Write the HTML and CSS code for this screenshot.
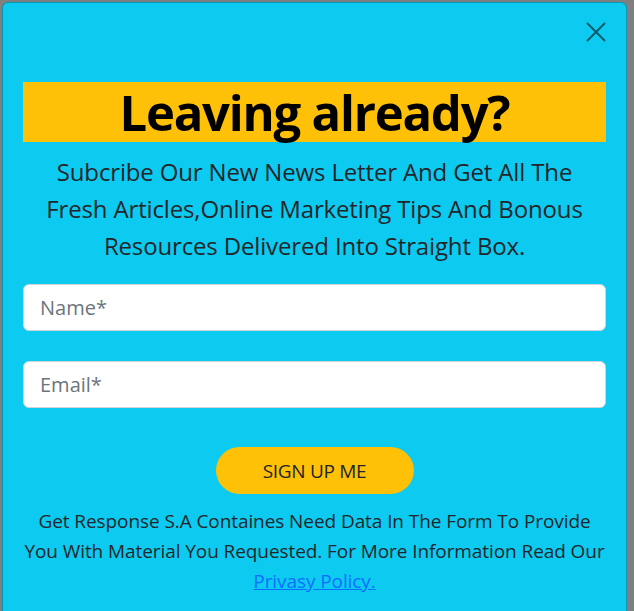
FILE: index.html
```html
<!DOCTYPE html>
<html lang="en">
<head>
<meta charset="utf-8">
<title>Leaving already?</title>
<link rel="stylesheet" href="styles.css">
</head>
<body>
<div class="modal">
  <div class="modal-header">
    <button class="btn-close" type="button" aria-label="Close">
      <svg viewBox="0 0 20 20" width="20" height="20" aria-hidden="true">
        <path d="M1 1 L19 19 M19 1 L1 19" fill="none" stroke="currentColor" stroke-width="2"/>
      </svg>
    </button>
  </div>
  <div class="modal-body">
    <h1 class="title">Leaving already?</h1>
    <p class="lead">Subcribe Our New News Letter And Get All The<br>Fresh Articles,Online Marketing Tips And Bonous<br>Resources Delivered Into Straight Box.</p>
    <form class="signup-form">
      <input class="field" type="text" placeholder="Name*">
      <input class="field" type="email" placeholder="Email*">
      <button class="signup-btn" type="button">SIGN UP ME</button>
    </form>
    <p class="note">Get Response S.A Containes Need Data In The Form To Provide<br>You With Material You Requested. For More Information Read Our<br><a href="#">Privasy Policy.</a></p>
  </div>
</div>
</body>
</html>
```

FILE: styles.css
```css
html, body {
  margin: 0;
  padding: 0;
  background: #7f7f7f;
  font-family: "Open Sans", "Noto Sans", sans-serif;
  color: #212529;
}

.modal {
  margin: 2px 0 0 2px;
  width: 625px;
  height: 640px;
  box-sizing: border-box;
  background: #0dcaf0;
  border: 1px solid rgba(0, 0, 0, 0.25);
  border-radius: 6px;
  overflow: hidden;
}

.modal-header {
  display: flex;
  justify-content: flex-end;
  padding: 19px 20px 0 0;
}

.btn-close {
  width: 20px;
  height: 20px;
  padding: 0;
  border: 0;
  background: none;
  color: rgba(0, 0, 0, 0.55);
  cursor: pointer;
  display: block;
}

.btn-close svg {
  display: block;
}

.modal-body {
  padding: 40px 20px 0 20px;
  text-align: center;
}

.title {
  margin: 0;
  height: 60px;
  line-height: 60px;
  background: #ffc107;
  color: #000;
  font-size: 49px;
  font-weight: 700;
  letter-spacing: -1.2px;
}

.lead {
  margin: 11px 0 0;
  font-size: 24px;
  line-height: 37px;
  letter-spacing: -0.15px;
  white-space: nowrap;
}

.signup-form {
  display: flex;
  flex-direction: column;
  align-items: center;
  margin-top: 20px;
}

.field {
  align-self: stretch;
  box-sizing: border-box;
  height: 47px;
  margin: 0 0 30px;
  padding: 0 16px;
  border: 1px solid #ced4da;
  border-radius: 6px;
  background: #fff;
  font-family: inherit;
  font-size: 20px;
  color: #212529;
}

.field::placeholder {
  color: #6c757d;
}

.signup-btn {
  margin-top: 9px;
  width: 198px;
  height: 47px;
  border: 0;
  border-radius: 24px;
  background: #ffc107;
  color: #212529;
  font-family: inherit;
  font-size: 19px;
  letter-spacing: -0.3px;
}

.note {
  margin: 12px 0 0;
  font-size: 19px;
  line-height: 30px;
  letter-spacing: -0.08px;
  white-space: nowrap;
}

.note a {
  color: #0d6efd;
  text-decoration: underline;
}
```
